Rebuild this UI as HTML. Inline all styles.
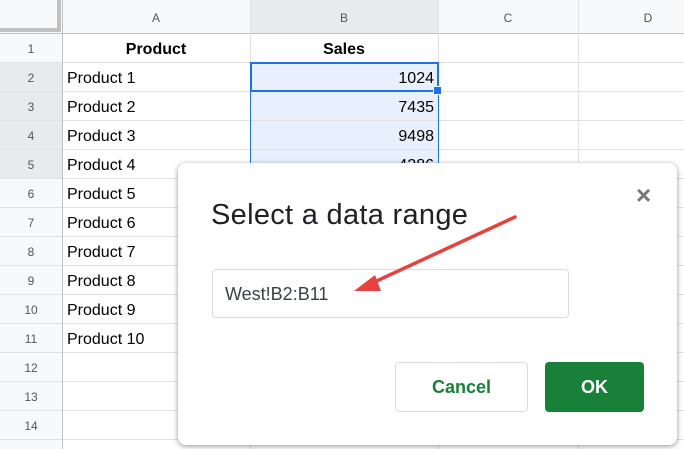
<!DOCTYPE html>
<html><head><style>
*{margin:0;padding:0;box-sizing:border-box}
body{width:684px;height:449px;overflow:hidden;background:#fff;font-family:"Liberation Sans",Arial,sans-serif;position:relative}
.abs{position:absolute}
.hl{position:absolute;left:0;width:684px;height:1px;background:#e2e2e2}
.vl{position:absolute;top:0;height:449px;width:1px;background:#e2e2e2}
.rn{position:absolute;left:0;width:62px;text-align:center;font-size:12px;color:#555}
.cell{position:absolute;font-size:16px;color:#000}
</style></head><body>
<div class="abs" style="left:0;top:0;width:684px;height:33px;background:#f8f9fa"></div>
<div class="abs" style="left:0;top:0;width:62px;height:449px;background:#f8f9fa"></div>
<div class="abs" style="left:250px;top:0;width:188px;height:33px;background:#e8eaed"></div>
<div class="abs" style="left:0;top:62px;width:62px;height:116px;background:#e8eaed"></div>
<div class="abs" style="left:0;top:0;width:61px;height:32px;background:#f8f9fa;border-right:4px solid #c0c0c0;border-bottom:4px solid #c0c0c0"></div>
<div class="abs" style="left:251px;top:63px;width:187px;height:115px;background:#e8f0fd"></div>
<div class="abs" style="left:62px;width:188px;top:11px;text-align:center;font-size:12px;color:#555">A</div>
<div class="abs" style="left:250px;width:188px;top:11px;text-align:center;font-size:12px;color:#555">B</div>
<div class="abs" style="left:438px;width:140px;top:11px;text-align:center;font-size:12px;color:#555">C</div>
<div class="abs" style="left:578px;width:140px;top:11px;text-align:center;font-size:12px;color:#555">D</div>
<div class="hl" style="top:33px;background:#c0c0c0"></div>
<div class="hl" style="top:62px"></div><div class="hl" style="top:91px"></div><div class="hl" style="top:120px"></div><div class="hl" style="top:149px"></div><div class="hl" style="top:178px"></div><div class="hl" style="top:207px"></div><div class="hl" style="top:236px"></div><div class="hl" style="top:265px"></div><div class="hl" style="top:294px"></div><div class="hl" style="top:323px"></div><div class="hl" style="top:352px"></div><div class="hl" style="top:381px"></div><div class="hl" style="top:410px"></div><div class="hl" style="top:439px"></div>
<div class="vl" style="left:62px;background:#c0c0c0"></div>
<div class="vl" style="left:250px"></div><div class="vl" style="left:438px"></div><div class="vl" style="left:578px"></div>
<div class="rn" style="top:42px">1</div>
<div class="rn" style="top:71px">2</div>
<div class="rn" style="top:100px">3</div>
<div class="rn" style="top:129px">4</div>
<div class="rn" style="top:158px">5</div>
<div class="rn" style="top:187px">6</div>
<div class="rn" style="top:216px">7</div>
<div class="rn" style="top:245px">8</div>
<div class="rn" style="top:274px">9</div>
<div class="rn" style="top:303px">10</div>
<div class="rn" style="top:332px">11</div>
<div class="rn" style="top:361px">12</div>
<div class="rn" style="top:390px">13</div>
<div class="rn" style="top:419px">14</div>
<div class="cell" style="left:62px;width:188px;top:41px;text-align:center;font-weight:bold">Product</div>
<div class="cell" style="left:250px;width:188px;top:41px;text-align:center;font-weight:bold">Sales</div>
<div class="cell" style="left:67px;top:70px">Product 1</div>
<div class="cell" style="left:67px;top:99px">Product 2</div>
<div class="cell" style="left:67px;top:128px">Product 3</div>
<div class="cell" style="left:67px;top:157px">Product 4</div>
<div class="cell" style="left:67px;top:186px">Product 5</div>
<div class="cell" style="left:67px;top:215px">Product 6</div>
<div class="cell" style="left:67px;top:244px">Product 7</div>
<div class="cell" style="left:67px;top:273px">Product 8</div>
<div class="cell" style="left:67px;top:302px">Product 9</div>
<div class="cell" style="left:67px;top:331px">Product 10</div>
<div class="cell" style="left:250px;width:184px;top:70px;text-align:right">1024</div>
<div class="cell" style="left:250px;width:184px;top:99px;text-align:right">7435</div>
<div class="cell" style="left:250px;width:184px;top:128px;text-align:right">9498</div>
<div class="cell" style="left:250px;width:184px;top:157px;text-align:right">4286</div>
<div class="abs" style="left:250px;top:62px;width:189px;height:120px;border:1px solid #1a73e8"></div>
<div class="abs" style="left:250px;top:62px;width:189px;height:30px;border:2px solid #1a73e8"></div>
<div class="abs" style="left:433px;top:86px;width:9px;height:9px;background:#1a73e8;border:1px solid #fff"></div>
<div class="abs" style="left:178px;top:163px;width:499px;height:282px;background:#fff;border-radius:8px;box-shadow:0 1px 4px rgba(0,0,0,.3),0 2px 8px rgba(0,0,0,.15)"></div>
<div class="abs" style="left:211px;top:199px;font-size:29px;color:#202124;letter-spacing:0.3px">Select a data range</div>
<div class="abs" style="left:636px;top:180px;font-size:26px;color:#777;font-weight:bold">×</div>
<div class="abs" style="left:212px;top:269px;width:357px;height:49px;border:1px solid #dadce0;border-radius:4px"></div>
<div class="abs" style="left:225px;top:284px;font-size:18px;color:#3c4043">West!B2:B11</div>
<div class="abs" style="left:395px;top:362px;width:133px;height:50px;border:1px solid #dadce0;border-radius:4px;color:#188038;font-size:18px;font-weight:bold;text-align:center;line-height:48px">Cancel</div>
<div class="abs" style="left:545px;top:362px;width:99px;height:50px;background:#188038;border-radius:4px;color:#fff;font-size:18px;font-weight:bold;text-align:center;line-height:50px">OK</div>
<svg class="abs" style="left:0;top:0" width="684" height="449">
<line x1="515" y1="217" x2="368" y2="285" stroke="#e8423f" stroke-width="3.5" stroke-linecap="round"/>
<polygon points="354,291 375,275 381,291" fill="#e8423f"/>
</svg>
</body></html>
